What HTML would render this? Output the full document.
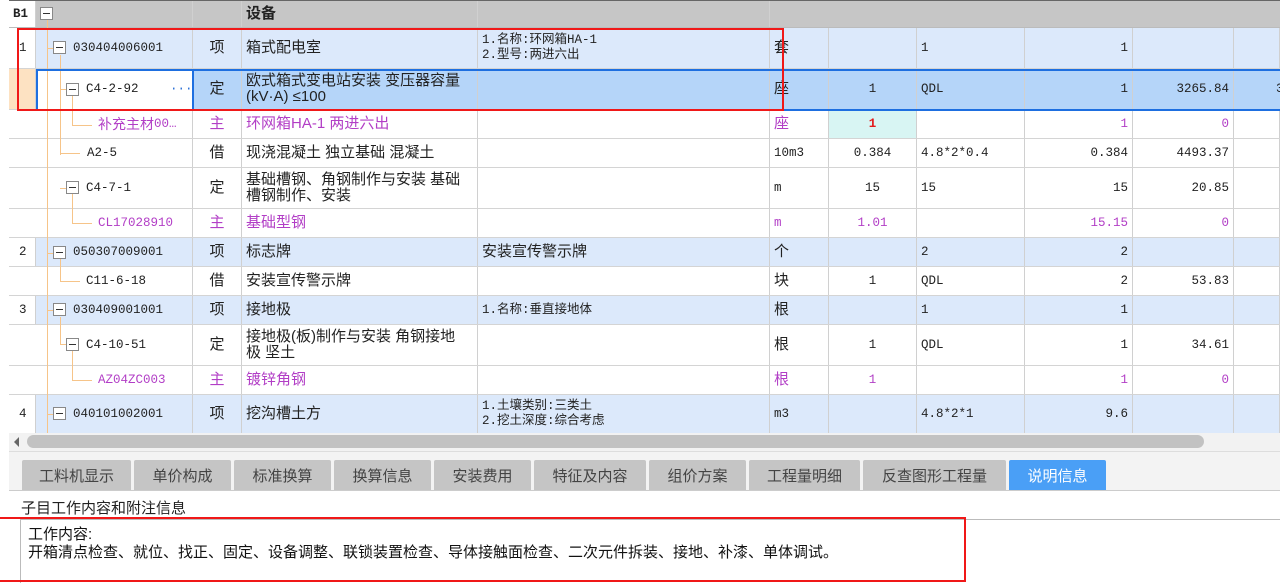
<!DOCTYPE html>
<html><head><meta charset="utf-8"><style>
*{margin:0;padding:0;box-sizing:border-box}
body{width:1280px;height:583px;overflow:hidden;background:#fff;position:relative;font-family:"Liberation Mono","Noto Sans CJK SC",monospace;font-size:12.5px;color:#222}
.r{position:absolute;left:9px;width:1271px;border-bottom:1px solid #d4d4d4}
.c{position:absolute;top:0;bottom:0;border-right:1px solid #d0d0d0;display:flex;align-items:center;padding:0 4px;line-height:16px;white-space:nowrap;overflow:hidden}
.n{padding-left:10px}
.k{font-family:"Liberation Sans","Noto Sans CJK SC",sans-serif;font-size:15px}
.f{font-family:"Liberation Mono","Noto Sans CJK SC",monospace;font-size:12.5px;line-height:15px}
.m{color:#b23ec6}
.blue{background:#dce9fb}
.sel{background:#b5d5f9}
.vl{position:absolute;background:#f6c489;width:1px}
.hl{position:absolute;background:#f6c489;height:1px}
.bx{position:absolute;width:13px;height:13px;border:1px solid #888;background:#fff}
.bx:after{content:"";position:absolute;left:2px;right:2px;top:5px;height:1px;background:#333}
.tab{position:absolute;top:460px;height:30px;background:#c5c5c5;font-family:"Liberation Sans","Noto Sans CJK SC",sans-serif;font-size:15px;color:#444;display:flex;align-items:center;justify-content:center;border-radius:2px 2px 0 0}
</style></head><body>
<div class="r" style="top:0;height:28px;background:#c6c6c6;border-bottom:1px solid #bbb;border-top:1px solid #666">
 <div class="c" style="left:0;width:27px;background:#fff;font-weight:bold">B1</div>
 <div class="c" style="left:27px;width:157px"></div>
 <div class="c" style="left:184px;width:49px"></div>
 <div class="c k" style="left:233px;width:236px;font-weight:bold">设备</div>
 <div class="c" style="left:469px;width:292px"></div>
 <div class="c" style="left:761px;width:59px;border:none"></div>
</div>
<div class="bx" style="left:40px;top:7px"></div>

<div class="r blue" style="top:28px;height:41px">
 <div class="c n" style="left:0;width:27px;background:#fff">1</div>
 <div class="c" style="left:27px;width:157px;padding-left:37px">030404006001</div>
 <div class="c k" style="left:184px;width:49px;justify-content:center">项</div>
 <div class="c k" style="left:233px;width:236px">箱式配电室</div>
 <div class="c f" style="left:469px;width:292px">1.名称:环网箱HA-1<br>2.型号:两进六出</div>
 <div class="c k" style="left:761px;width:59px">套</div>
 <div class="c" style="left:820px;width:88px"></div>
 <div class="c" style="left:908px;width:108px">1</div>
 <div class="c" style="left:1016px;width:108px;justify-content:flex-end">1</div>
 <div class="c" style="left:1124px;width:101px"></div>
 <div class="c" style="left:1225px;width:46px"></div>
</div>
<div class="r sel" style="top:69px;height:41px">
 <div class="c" style="left:0;width:27px;background:#fde2c2"></div>
 <div class="c" style="left:27px;width:157px;padding-left:50px;background:#fff">C4-2-92<span style="position:absolute;left:134px;color:#2a6fd6">···</span></div>
 <div class="c k" style="left:184px;width:49px;justify-content:center">定</div>
 <div class="c k" style="left:233px;width:236px">欧式箱式变电站安装 变压器容量<br>(kV·A) ≤100</div>
 <div class="c" style="left:469px;width:292px"></div>
 <div class="c k" style="left:761px;width:59px">座</div>
 <div class="c" style="left:820px;width:88px;justify-content:center">1</div>
 <div class="c" style="left:908px;width:108px">QDL</div>
 <div class="c" style="left:1016px;width:108px;justify-content:flex-end">1</div>
 <div class="c" style="left:1124px;width:101px;justify-content:flex-end">3265.84</div>
 <div class="c" style="left:1225px;width:46px;padding-left:42px">3</div>
</div>
<div class="r m" style="top:110px;height:29px">
 <div class="c" style="left:27px;width:157px;padding-left:62px;color:#b23ec6"><span class="k" style="font-size:14px">补充主材</span>00…</div>
 <div class="c k" style="left:184px;width:49px;justify-content:center">主</div>
 <div class="c k" style="left:233px;width:236px">环网箱HA-1 两进六出</div>
 <div class="c" style="left:469px;width:292px"></div>
 <div class="c k" style="left:761px;width:59px">座</div>
 <div class="c" style="left:820px;width:88px;justify-content:center;background:#d8f5f3;color:#e21b1b;font-weight:bold">1</div>
 <div class="c" style="left:908px;width:108px"></div>
 <div class="c" style="left:1016px;width:108px;justify-content:flex-end">1</div>
 <div class="c" style="left:1124px;width:101px;justify-content:flex-end">0</div>
 <div class="c" style="left:1225px;width:46px"></div>
</div>
<div class="r" style="top:139px;height:29px">
 <div class="c" style="left:27px;width:157px;padding-left:51px">A2-5</div>
 <div class="c k" style="left:184px;width:49px;justify-content:center">借</div>
 <div class="c k" style="left:233px;width:236px">现浇混凝土 独立基础 混凝土</div>
 <div class="c" style="left:469px;width:292px"></div>
 <div class="c" style="left:761px;width:59px">10m3</div>
 <div class="c" style="left:820px;width:88px;justify-content:center">0.384</div>
 <div class="c" style="left:908px;width:108px">4.8*2*0.4</div>
 <div class="c" style="left:1016px;width:108px;justify-content:flex-end">0.384</div>
 <div class="c" style="left:1124px;width:101px;justify-content:flex-end">4493.37</div>
 <div class="c" style="left:1225px;width:46px"></div>
</div>
<div class="r" style="top:168px;height:41px">
 <div class="c" style="left:27px;width:157px;padding-left:50px">C4-7-1</div>
 <div class="c k" style="left:184px;width:49px;justify-content:center">定</div>
 <div class="c k" style="left:233px;width:236px">基础槽钢、角钢制作与安装 基础<br>槽钢制作、安装</div>
 <div class="c" style="left:469px;width:292px"></div>
 <div class="c" style="left:761px;width:59px">m</div>
 <div class="c" style="left:820px;width:88px;justify-content:center">15</div>
 <div class="c" style="left:908px;width:108px">15</div>
 <div class="c" style="left:1016px;width:108px;justify-content:flex-end">15</div>
 <div class="c" style="left:1124px;width:101px;justify-content:flex-end">20.85</div>
 <div class="c" style="left:1225px;width:46px"></div>
</div>
<div class="r m" style="top:209px;height:29px">
 <div class="c" style="left:27px;width:157px;padding-left:62px">CL17028910</div>
 <div class="c k" style="left:184px;width:49px;justify-content:center">主</div>
 <div class="c k" style="left:233px;width:236px">基础型钢</div>
 <div class="c" style="left:469px;width:292px"></div>
 <div class="c" style="left:761px;width:59px">m</div>
 <div class="c" style="left:820px;width:88px;justify-content:center">1.01</div>
 <div class="c" style="left:908px;width:108px"></div>
 <div class="c" style="left:1016px;width:108px;justify-content:flex-end">15.15</div>
 <div class="c" style="left:1124px;width:101px;justify-content:flex-end">0</div>
 <div class="c" style="left:1225px;width:46px"></div>
</div>
<div class="r blue" style="top:238px;height:29px">
 <div class="c n" style="left:0;width:27px;background:#fff">2</div>
 <div class="c" style="left:27px;width:157px;padding-left:37px">050307009001</div>
 <div class="c k" style="left:184px;width:49px;justify-content:center">项</div>
 <div class="c k" style="left:233px;width:236px">标志牌</div>
 <div class="c k" style="left:469px;width:292px">安装宣传警示牌</div>
 <div class="c k" style="left:761px;width:59px">个</div>
 <div class="c" style="left:820px;width:88px"></div>
 <div class="c" style="left:908px;width:108px">2</div>
 <div class="c" style="left:1016px;width:108px;justify-content:flex-end">2</div>
 <div class="c" style="left:1124px;width:101px"></div>
 <div class="c" style="left:1225px;width:46px"></div>
</div>
<div class="r" style="top:267px;height:29px">
 <div class="c" style="left:27px;width:157px;padding-left:50px">C11-6-18</div>
 <div class="c k" style="left:184px;width:49px;justify-content:center">借</div>
 <div class="c k" style="left:233px;width:236px">安装宣传警示牌</div>
 <div class="c" style="left:469px;width:292px"></div>
 <div class="c k" style="left:761px;width:59px">块</div>
 <div class="c" style="left:820px;width:88px;justify-content:center">1</div>
 <div class="c" style="left:908px;width:108px">QDL</div>
 <div class="c" style="left:1016px;width:108px;justify-content:flex-end">2</div>
 <div class="c" style="left:1124px;width:101px;justify-content:flex-end">53.83</div>
 <div class="c" style="left:1225px;width:46px"></div>
</div>
<div class="r blue" style="top:296px;height:29px">
 <div class="c n" style="left:0;width:27px;background:#fff">3</div>
 <div class="c" style="left:27px;width:157px;padding-left:37px">030409001001</div>
 <div class="c k" style="left:184px;width:49px;justify-content:center">项</div>
 <div class="c k" style="left:233px;width:236px">接地极</div>
 <div class="c f" style="left:469px;width:292px">1.名称:垂直接地体</div>
 <div class="c k" style="left:761px;width:59px">根</div>
 <div class="c" style="left:820px;width:88px"></div>
 <div class="c" style="left:908px;width:108px">1</div>
 <div class="c" style="left:1016px;width:108px;justify-content:flex-end">1</div>
 <div class="c" style="left:1124px;width:101px"></div>
 <div class="c" style="left:1225px;width:46px"></div>
</div>
<div class="r" style="top:325px;height:41px">
 <div class="c" style="left:27px;width:157px;padding-left:50px">C4-10-51</div>
 <div class="c k" style="left:184px;width:49px;justify-content:center">定</div>
 <div class="c k" style="left:233px;width:236px">接地极(板)制作与安装 角钢接地<br>极 坚土</div>
 <div class="c" style="left:469px;width:292px"></div>
 <div class="c k" style="left:761px;width:59px">根</div>
 <div class="c" style="left:820px;width:88px;justify-content:center">1</div>
 <div class="c" style="left:908px;width:108px">QDL</div>
 <div class="c" style="left:1016px;width:108px;justify-content:flex-end">1</div>
 <div class="c" style="left:1124px;width:101px;justify-content:flex-end">34.61</div>
 <div class="c" style="left:1225px;width:46px"></div>
</div>
<div class="r m" style="top:366px;height:29px">
 <div class="c" style="left:27px;width:157px;padding-left:62px">AZ04ZC003</div>
 <div class="c k" style="left:184px;width:49px;justify-content:center">主</div>
 <div class="c k" style="left:233px;width:236px">镀锌角钢</div>
 <div class="c" style="left:469px;width:292px"></div>
 <div class="c k" style="left:761px;width:59px">根</div>
 <div class="c" style="left:820px;width:88px;justify-content:center">1</div>
 <div class="c" style="left:908px;width:108px"></div>
 <div class="c" style="left:1016px;width:108px;justify-content:flex-end">1</div>
 <div class="c" style="left:1124px;width:101px;justify-content:flex-end">0</div>
 <div class="c" style="left:1225px;width:46px"></div>
</div>
<div class="r blue" style="top:395px;height:38px;border:none">
 <div class="c n" style="left:0;width:27px;background:#fff">4</div>
 <div class="c" style="left:27px;width:157px;padding-left:37px">040101002001</div>
 <div class="c k" style="left:184px;width:49px;justify-content:center">项</div>
 <div class="c k" style="left:233px;width:236px">挖沟槽土方</div>
 <div class="c f" style="left:469px;width:292px">1.土壤类别:三类土<br>2.挖土深度:综合考虑</div>
 <div class="c" style="left:761px;width:59px">m3</div>
 <div class="c" style="left:820px;width:88px"></div>
 <div class="c" style="left:908px;width:108px">4.8*2*1</div>
 <div class="c" style="left:1016px;width:108px;justify-content:flex-end">9.6</div>
 <div class="c" style="left:1124px;width:101px"></div>
 <div class="c" style="left:1225px;width:46px"></div>
</div>

<div class="vl" style="left:47px;top:20px;height:413px"></div>
<div class="vl" style="left:60px;top:55px;height:100px"></div>
<div class="hl" style="left:47px;top:48px;width:6px"></div>
<div class="hl" style="left:60px;top:89px;width:6px"></div>
<div class="vl" style="left:72px;top:96px;height:29px"></div>
<div class="hl" style="left:72px;top:125px;width:20px"></div>
<div class="hl" style="left:60px;top:153px;width:20px"></div>
<div class="hl" style="left:60px;top:188px;width:6px"></div>
<div class="vl" style="left:72px;top:194px;height:29px"></div>
<div class="hl" style="left:72px;top:223px;width:20px"></div>
<div class="hl" style="left:47px;top:253px;width:6px"></div>
<div class="vl" style="left:60px;top:259px;height:22px"></div>
<div class="hl" style="left:60px;top:281px;width:20px"></div>
<div class="hl" style="left:47px;top:310px;width:6px"></div>
<div class="vl" style="left:60px;top:317px;height:27px"></div>
<div class="hl" style="left:60px;top:344px;width:6px"></div>
<div class="vl" style="left:72px;top:351px;height:29px"></div>
<div class="hl" style="left:72px;top:380px;width:20px"></div>
<div class="hl" style="left:47px;top:414px;width:6px"></div>
<div class="bx" style="left:53px;top:41px"></div>
<div class="bx" style="left:66px;top:83px"></div>
<div class="bx" style="left:66px;top:181px"></div>
<div class="bx" style="left:53px;top:246px"></div>
<div class="bx" style="left:53px;top:303px"></div>
<div class="bx" style="left:66px;top:338px"></div>
<div class="bx" style="left:53px;top:407px"></div>

<div style="position:absolute;left:36px;top:69px;width:1250px;height:42px;border:2px solid #1e6fe0"></div>
<div style="position:absolute;left:36px;top:69px;width:158px;height:42px;border:2px solid #1e6fe0"></div>
<div style="position:absolute;left:17px;top:28px;width:767px;height:83px;border:2px solid #f01818"></div>

<div style="position:absolute;left:9px;top:433px;width:1271px;height:18px;background:#f2f2f2"></div>
<div style="position:absolute;left:14px;top:437px;width:0;height:0;border-top:5px solid transparent;border-bottom:5px solid transparent;border-right:5px solid #666"></div>
<div style="position:absolute;left:27px;top:435px;width:1177px;height:13px;background:#c2c2c2;border-radius:7px"></div>
<div style="position:absolute;left:9px;top:451px;width:1271px;height:40px;background:#f3f3f3;border-top:1px solid #ddd"></div>

<div class="tab" style="left:22px;width:109px">工料机显示</div>
<div class="tab" style="left:134px;width:97px">单价构成</div>
<div class="tab" style="left:234px;width:97px">标准换算</div>
<div class="tab" style="left:334px;width:97px">换算信息</div>
<div class="tab" style="left:434px;width:97px">安装费用</div>
<div class="tab" style="left:534px;width:112px">特征及内容</div>
<div class="tab" style="left:649px;width:97px">组价方案</div>
<div class="tab" style="left:749px;width:111px">工程量明细</div>
<div class="tab" style="left:863px;width:143px">反查图形工程量</div>
<div class="tab" style="left:1009px;width:97px;background:#4a9ff6;color:#fff">说明信息</div>
<div style="position:absolute;left:9px;top:490px;width:1271px;height:1px;background:#ccc"></div>

<div class="k" style="position:absolute;left:21px;top:497px;font-size:15px;color:#222">子目工作内容和附注信息</div>
<div style="position:absolute;left:20px;top:519px;width:1260px;height:64px;border-top:1px solid #bbb;border-left:1px solid #bbb"></div>
<div class="k" style="position:absolute;left:28px;top:526px;font-size:15px;line-height:18px;color:#111">工作内容:<br>开箱清点检查、就位、找正、固定、设备调整、联锁装置检查、导体接触面检查、二次元件拆装、接地、补漆、单体调试。</div>
<div style="position:absolute;left:-5px;top:517px;width:971px;height:65px;border:2px solid #f01818"></div>
</body></html>
